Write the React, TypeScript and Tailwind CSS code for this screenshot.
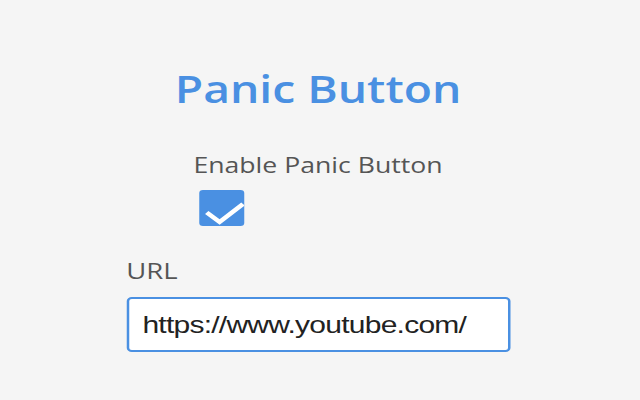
import { useState } from "react";

// the whole form is drawn 1.25x wide, like the reference capture
export default function App() {
  const [enabled, setEnabled] = useState(true);
  const [url, setUrl] = useState("https://www.youtube.com/");

  return (
    <div className="h-[400px] w-[640px] overflow-hidden bg-[#f5f5f5] pr-[4px] font-['Open_Sans',sans-serif]">
      <div className="flex origin-center scale-x-[1.25] flex-col items-center">
        <h1 className="mt-[65px] text-[37px] leading-[48px] font-semibold text-[#4a90e2]">Panic Button</h1>

        <div className="mt-[38px] flex flex-col">
          <span className="text-[21.3px] leading-[28px] text-[#555]">Enable Panic Button</span>
          <button
            className="mt-[11px] ml-[5px] h-[36px] w-[36px] rounded-[3px] bg-[#4a90e2]"
            onClick={() => setEnabled(!enabled)}
          >
            {enabled && (
              <svg viewBox="0 0 36 36" className="h-[36px] w-[36px]">
                <path d="M6 22.5 L16.3 32 L35 14" fill="none" stroke="#fff" strokeWidth="4" />
              </svg>
            )}
          </button>
        </div>

        <div className="mt-[32px] flex w-[307px] flex-col">
          <span className="text-[22px] leading-[24px] text-[#555]">URL</span>
          <input
            className="mt-[15px] h-[55px] w-[307px] rounded-[4px] border-2 border-[#4a90e2] bg-white px-[11px] font-['Liberation_Sans',sans-serif] text-[24px] tracking-[-0.6px] text-[#222] outline-none"
            value={url}
            onChange={(e) => setUrl(e.target.value)}
          />
        </div>
      </div>
    </div>
  );
}
